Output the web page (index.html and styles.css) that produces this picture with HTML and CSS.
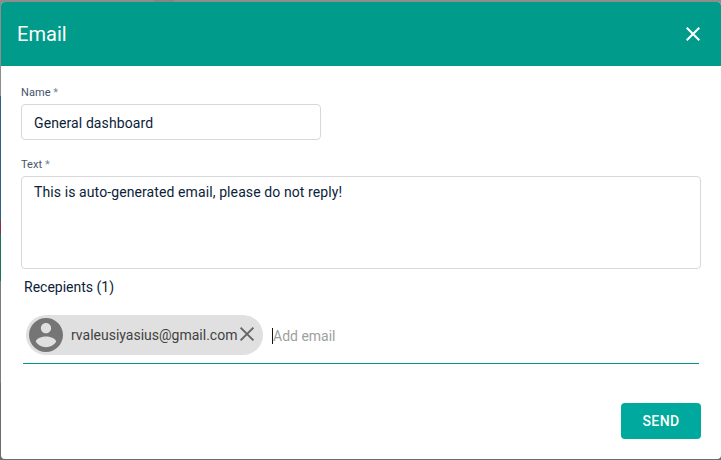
FILE: index.html
```html
<!DOCTYPE html>
<html lang="en">
<head>
<meta charset="utf-8">
<title>Email</title>
<link rel="stylesheet" href="styles.css">
</head>
<body>
<section class="dialog">
  <header class="header">
    <h1 class="title">Email</h1>
    <svg class="close" viewBox="0 0 14 14"><path d="M.7.7l12.6 12.6M13.3.7L.7 13.3"/></svg>
  </header>
  <form class="form">
    <label class="label">Name <span class="star">*</span></label>
    <div class="field name">General dashboard</div>
    <label class="label">Text <span class="star">*</span></label>
    <div class="field message">This is auto-generated email, please do not reply!</div>
    <div class="recipients">Recepients (1)</div>
    <div class="chips">
      <div class="chip">
        <svg class="avatar" viewBox="2 2 20 20"><path d="M12 2C6.480 2 2 6.480 2 12s4.480 10 10 10 10-4.480 10-10S17.520 2 12 2zm0 3c1.660 0 3 1.340 3 3s-1.340 3-3 3-3-1.340-3-3 1.340-3 3-3zm0 14.200c-2.500 0-4.710-1.280-6-3.220.030-1.990 4-3.080 6-3.080 1.990 0 5.970 1.090 6 3.080-1.290 1.940-3.500 3.220-6 3.220z"/></svg>
        <span class="address">rvaleusiyasius@gmail.com</span>
        <svg class="remove" viewBox="0 0 14 14"><path d="M.6.6l12.8 12.8M13.4.6L.6 13.4"/></svg>
      </div>
      <span class="caret"></span>
      <span class="placeholder">Add email</span>
    </div>
    <div class="actions"><button class="send" type="button">SEND</button></div>
  </form>
</section>
</body>
</html>
```

FILE: styles.css
```css
* { box-sizing: border-box; }
body {
  margin: 0;
  height: 460px;
  padding: 2px 0 1px 1px;
  overflow: hidden;
  font-family: Roboto, sans-serif;
  color: #0b2239;
  background:
    linear-gradient(#858585, #858585) 154px 0 / 20px 2px no-repeat,
    linear-gradient(#8f8c8c 0 96px, #2f6182 96px 221px, #873043 221px 234px, #20705f 234px 281px, #7c7c7c 281px 383px, #6d6b6d 383px);
}
.dialog {
  height: 457px;
  border-radius: 4px;
  overflow: hidden;
  background: #fff;
}
.header {
  height: 64px;
  padding: 0 21px 0 16px;
  display: flex;
  align-items: center;
  justify-content: space-between;
  background: #009b8a;
  color: #fff;
}
.title {
  margin: 0;
  font-size: 20px;
  line-height: 32px;
  font-weight: 400;
  letter-spacing: .05px;
}
.close { width: 14px; height: 14px; fill: none; stroke: #fff; stroke-width: 2; }
.form { padding: 19px 20px 0; }
.label {
  display: block;
  height: 16px;
  margin-bottom: 3px;
  font-size: 11px;
  line-height: 16px;
  letter-spacing: .06px;
  color: #44556a;
}
.star { color: #7b8794; }
.field {
  border: 1px solid #d8d8d8;
  border-radius: 4px;
  padding: 0 12px;
  font-size: 14px;
  letter-spacing: .1px;
}
.name { width: 300px; height: 36px; margin-bottom: 17px; line-height: 36px; }
.message { height: 93px; padding-top: 5px; line-height: 20px; }
.recipients {
  height: 36px;
  padding-left: 3px;
  font-size: 14px;
  line-height: 36px;
}
.chips {
  height: 59px;
  margin: 0 2px;
  padding: 10px 0 0 3px;
  display: flex;
  border-bottom: 1px solid #009688;
}
.chip {
  width: 237px;
  height: 40px;
  padding: 0 9px 0 3px;
  display: flex;
  align-items: center;
  border-radius: 20px;
  background: #e0e0e0;
  color: #424242;
}
.avatar { width: 34px; height: 34px; margin-right: 8px; fill: #757575; flex: none; }
.address { width: 169px; font-size: 14px; white-space: nowrap; }
.remove { width: 14px; height: 14px; fill: none; stroke: #666; stroke-width: 2; flex: none; overflow: visible; margin-bottom: 2px; }
.caret { width: 1px; height: 16px; margin: 13px 0 0 9px; background: #111; }
.placeholder { margin-top: 11px; font-size: 14px; line-height: 20px; color: #a0a0a0; }
.actions { display: flex; justify-content: flex-end; padding-top: 39px; }
.send {
  width: 80px;
  height: 36px;
  padding: 0;
  border: 0;
  border-radius: 4px;
  background: #00a99d;
  color: #fff;
  font: 500 14px/36px Roboto, sans-serif;
  letter-spacing: .4px;
}
```
